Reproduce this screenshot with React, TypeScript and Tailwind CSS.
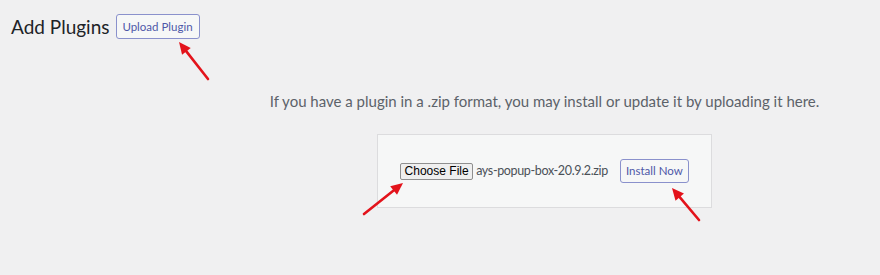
import React from 'react';

type Arrow = { x1: number; y1: number; x2: number; y2: number };

const arrows: Arrow[] = [
  { x1: 208, y1: 79, x2: 179, y2: 42 },
  { x1: 364, y1: 214, x2: 403, y2: 183 },
  { x1: 699, y1: 220, x2: 672, y2: 188 },
];

// red annotation arrow: line plus filled head at the tip
const ArrowMark: React.FC<{ a: Arrow }> = ({ a }) => {
  const dx = a.x2 - a.x1;
  const dy = a.y2 - a.y1;
  const len = Math.hypot(dx, dy);
  const ux = dx / len;
  const uy = dy / len;
  const headLen = 12;
  const headW = 5.5;
  const bx = a.x2 - ux * headLen;
  const by = a.y2 - uy * headLen;
  const pts = [
    `${a.x2},${a.y2}`,
    `${bx - uy * headW},${by + ux * headW}`,
    `${bx + uy * headW},${by - ux * headW}`,
  ].join(' ');
  return (
    <g>
      <line x1={a.x1} y1={a.y1} x2={bx + ux * 2} y2={by + uy * 2} stroke="#e3131b" strokeWidth={2.6} strokeLinecap="round" />
      <polygon points={pts} fill="#e3131b" />
    </g>
  );
};

const App: React.FC = () => {
  return (
    <div className="relative w-[880px] h-[275px] bg-[#f0f0f1] overflow-hidden font-['Lato',sans-serif]">
      <div className="flex items-center pl-[11px] pt-[14px]">
        <h1 className="text-[19px] leading-[25px] text-[#1d2327] font-normal">Add Plugins</h1>
        <button className="ml-[6px] h-[25px] w-[84px] border border-[#8a91cc] rounded-[3px] bg-[#f6f7f7] text-[11.5px] text-[#4e58a8]">
          Upload Plugin
        </button>
      </div>

      <div className="pl-[209px] pt-[52px] flex flex-col items-center">
        <p className="text-[15px] leading-[20px] text-[#5c6269]">
          If you have a plugin in a .zip format, you may install or update it by uploading it here.
        </p>
        <div className="mt-[23px] w-[335px] h-[74px] bg-[#f6f7f7] border border-[#dcdcde] flex items-center justify-center">
          <div className="flex items-center">
            <span className="h-[17px] w-[73px] flex items-center justify-center bg-[#efefef] border border-[#8f8f8f] rounded-[2px] text-[12px] text-black font-['Liberation_Sans',sans-serif]">
              Choose File
            </span>
            <span className="ml-[3px] whitespace-nowrap text-[12.5px] tracking-[-0.35px] text-[#4b5157]">ays-popup-box-20.9.2.zip</span>
            <button className="ml-[12px] h-[24px] w-[69px] border border-[#8a91cc] rounded-[3px] bg-[#f6f7f7] text-[11.5px] text-[#4e58a8]">
              Install Now
            </button>
          </div>
        </div>
      </div>

      <svg className="absolute inset-0 pointer-events-none" width="880" height="275">
        {arrows.map((a, i) => (
          <ArrowMark key={i} a={a} />
        ))}
      </svg>
    </div>
  );
};

export default App;
